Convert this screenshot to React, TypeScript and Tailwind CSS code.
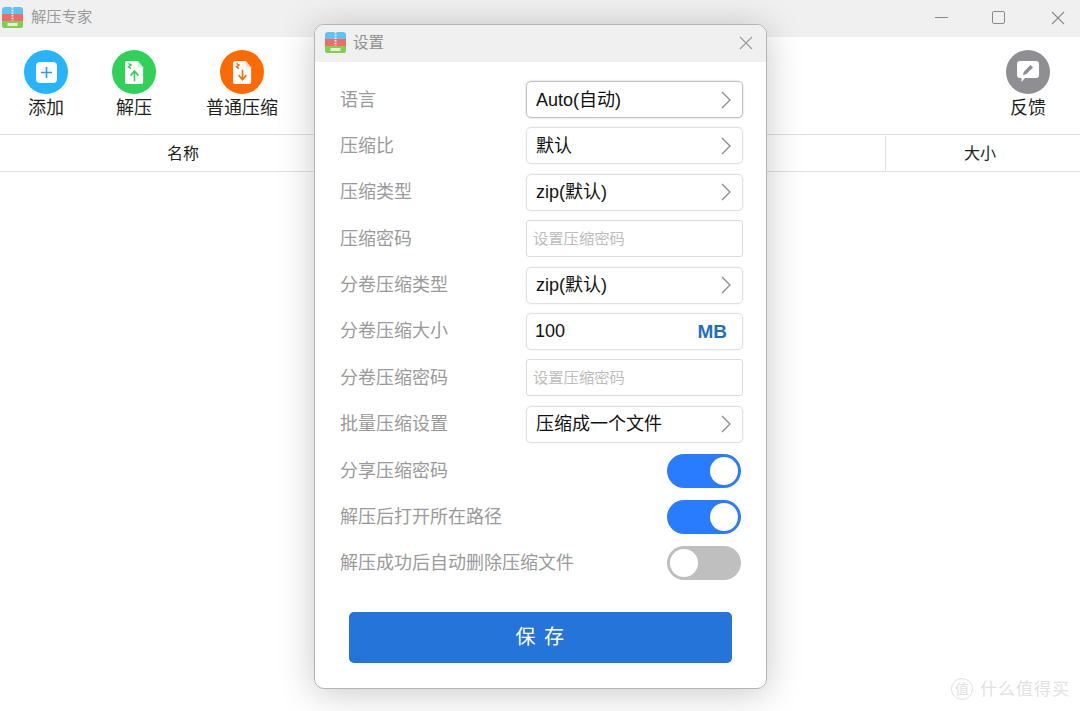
const font = { fontFamily: '"Liberation Sans", "Noto Sans CJK SC", sans-serif' }

function Logo() {
  return (
    <svg width="21" height="21" viewBox="0 0 21 21" className="shrink-0">
      <rect width="21" height="21" rx="3" fill="#5cc4f5" />
      <path d="M0 7h21v7H0z" fill="#f26a6a" />
      <path d="M0 14h21v4a3 3 0 0 1-3 3H3a3 3 0 0 1-3-3z" fill="#7fd04b" />
      <path d="M10.5 0v14" stroke="#e8eef5" strokeWidth="2" strokeDasharray="1.5 1.2" />
      <rect x="5.5" y="16" width="10" height="3" fill="#f4f8ee" opacity="0.85" />
    </svg>
  )
}

function CloseIcon({ size, color }: { size: number; color: string }) {
  return (
    <svg width={size} height={size} viewBox="0 0 14 14" fill="none" stroke={color} strokeWidth="1.1">
      <path d="M1 1l12 12M13 1L1 13" />
    </svg>
  )
}

function FileGlyph({ dir, color }: { dir: 'up' | 'down'; color: string }) {
  return (
    <svg width="19" height="23" viewBox="0 0 22 24" preserveAspectRatio="none">
      <path d="M2 0h13l6 6.5V22a2 2 0 0 1-2 2H2a2 2 0 0 1-2-2V2a2 2 0 0 1 2-2z" fill="#fff" />
      <path d="M15 0l6 6.5h-6z" fill={color} opacity="0.25" />
      <path d="M4 2.5l3 1.8-3 1.8 3 1.8" stroke={color} strokeWidth="1.6" fill="none" />
      {dir === 'up' ? (
        <path d="M11 21V11M6.5 15.2L11 10.5l4.5 4.7" stroke={color} strokeWidth="1.8" fill="none" />
      ) : (
        <path d="M11 9v10M6.5 14.8L11 19.5l4.5-4.7" stroke={color} strokeWidth="1.8" fill="none" />
      )}
    </svg>
  )
}

function ToolItem({ label, color, width, className, children }: {
  label: string; color: string; width: string; className: string; children: React.ReactNode
}) {
  return (
    <div className={`flex flex-col items-center ${width} ${className}`}>
      <div className={`h-[44px] w-[44px] rounded-full flex items-center justify-center ${color}`}>
        {children}
      </div>
      <span className="mt-[3px] text-[18px] leading-[22px] text-[#1f1f1f] whitespace-nowrap">{label}</span>
    </div>
  )
}

function Chevron() {
  return (
    <svg width="12" height="18" viewBox="0 0 12 18" fill="none" stroke="#8f8f8f" strokeWidth="1.4">
      <path d="M2 1l8 8-8 8" />
    </svg>
  )
}

function Select({ value, strong }: { value: string; strong?: boolean }) {
  return (
    <div className={`h-[37px] w-[217px] rounded-[5px] border flex items-center justify-between pl-[9px] pr-[10px] text-[18px] text-[#111] ${strong ? 'border-[#c2c2c2] shadow-[0_0_2px_rgba(0,0,0,0.25)]' : 'border-[#e0e0e0] shadow-[0_0_2px_rgba(0,0,0,0.1)]'}`}>
      <span className="pt-[1px]">{value}</span>
      <Chevron />
    </div>
  )
}

function Input({ placeholder }: { placeholder: string }) {
  return (
    <div className="h-[37px] w-[217px] rounded-[3px] border border-[#dcdcdc] flex items-center pl-[6px] pt-[1px] text-[15.3px] text-[#bdbdbd]">
      {placeholder}
    </div>
  )
}

function Toggle({ on }: { on: boolean }) {
  return (
    <div className={`h-[34px] w-[74px] mr-[2px] rounded-full p-[3px] flex ${on ? 'bg-[#2a7cff] justify-end' : 'bg-[#bfbfbf] justify-start'}`}>
      <div className="h-[28px] w-[28px] rounded-full bg-white" />
    </div>
  )
}

const rows: { label: string; el: React.ReactNode }[] = [
  { label: '语言', el: <Select value="Auto(自动)" strong /> },
  { label: '压缩比', el: <Select value="默认" /> },
  { label: '压缩类型', el: <Select value="zip(默认)" /> },
  { label: '压缩密码', el: <Input placeholder="设置压缩密码" /> },
  { label: '分卷压缩类型', el: <Select value="zip(默认)" /> },
  {
    label: '分卷压缩大小',
    el: (
      <div className="h-[37px] w-[217px] rounded-[5px] border border-[#e0e0e0] shadow-[0_0_2px_rgba(0,0,0,0.1)] flex items-center justify-between pl-[8px] pr-[15px] pt-[1px] text-[18px] text-[#111]">
        <span>100</span>
        <span className="font-bold text-[#1f6fc4] text-[19px]">MB</span>
      </div>
    ),
  },
  { label: '分卷压缩密码', el: <Input placeholder="设置压缩密码" /> },
  { label: '批量压缩设置', el: <Select value="压缩成一个文件" /> },
  { label: '分享压缩密码', el: <Toggle on /> },
  { label: '解压后打开所在路径', el: <Toggle on /> },
  { label: '解压成功后自动删除压缩文件', el: <Toggle on={false} /> },
]

export default function App() {
  return (
    <div className="relative h-[711px] w-[1080px] overflow-hidden bg-white flex flex-col" style={font}>
      <div className="h-[37px] bg-[#f0f0f0] flex items-center pl-[2px] pb-[2px] shrink-0">
        <Logo />
        <span className="ml-[8px] text-[15.3px] text-[#9a9a9a]">解压专家</span>
        <div className="ml-auto flex items-center">
          <div className="h-[1px] w-[13px] bg-[#8a8a8a] mr-[44px]" />
          <div className="h-[13px] w-[13px] rounded-[2px] border border-[#8a8a8a] mr-[46px]" />
          <div className="mr-[15px]"><CloseIcon size={14} color="#8a8a8a" /></div>
        </div>
      </div>

      <div className="h-[98px] shrink-0 border-b border-[#e0e0e0] flex pt-[13px] items-start">
        <ToolItem label="添加" color="bg-[#27b4fd]" width="w-[44px]" className="ml-[24px]">
          <div className="h-[21px] w-[21px] rounded-[4px] bg-white flex items-center justify-center">
            <svg width="11" height="11" viewBox="0 0 11 11" stroke="#2a9df4" strokeWidth="1.6">
              <path d="M5.5 0v11M0 5.5h11" />
            </svg>
          </div>
        </ToolItem>
        <ToolItem label="解压" color="bg-[#30d158]" width="w-[44px]" className="ml-[44px]">
          <FileGlyph dir="up" color="#30d158" />
        </ToolItem>
        <ToolItem label="普通压缩" color="bg-[#ff6a00]" width="w-[72px]" className="ml-[50px]">
          <FileGlyph dir="down" color="#ff6a00" />
        </ToolItem>
        <ToolItem label="反馈" color="bg-[#8e8e93]" width="w-[44px]" className="ml-auto mr-[30px]">
          <svg width="24" height="24" viewBox="0 0 24 24">
            <path d="M4 1h16a3 3 0 0 1 3 3v11a3 3 0 0 1-3 3H9l-3.500 4v-4H4a3 3 0 0 1-3-3V4a3 3 0 0 1 3-3z" fill="#fff" />
            <path d="M7 15l.8-3.200 6.800-6.800 2.400 2.400-6.800 6.800z" fill="#8e8e93" />
          </svg>
        </ToolItem>
      </div>

      <div className="h-[37px] shrink-0 border-b border-[#e0e0e0] flex pt-[1px] text-[16px] text-[#222]">
        <div className="w-[366px] flex items-center justify-center">名称</div>
        <div className="flex-1" />
        <div className="w-[195px] pr-[6px] border-l border-[#e0e0e0] flex items-center justify-center">大小</div>
      </div>

      <div className="absolute right-[10px] bottom-[9px] flex items-center gap-[7px] text-[#e2e2e2]">
        <div className="h-[22px] w-[22px] rounded-full border border-[#e2e2e2] flex items-center justify-center text-[14px]">值</div>
        <span className="text-[17px] tracking-[1px]">什么值得买</span>
      </div>

      <div className="absolute left-[314px] top-[24px] h-[665px] w-[453px] rounded-[10px] border border-[#b5b5b5] bg-white overflow-hidden shadow-[0_4px_36px_rgba(0,0,0,0.22)] flex flex-col">
        <div className="h-[37px] shrink-0 bg-[#f0f0f0] flex items-center pl-[10px] pr-[13px] pb-[2px]">
          <Logo />
          <span className="ml-[7px] text-[15.5px] text-[#8f8f8f]">设置</span>
          <div className="ml-auto"><CloseIcon size={14} color="#9a9a9a" /></div>
        </div>

        <div className="pt-[19px] pl-[25px] pr-[23px] flex flex-col gap-[9.4px]">
          {rows.map((r) => (
            <div key={r.label} className="h-[37px] flex items-center justify-between">
              <span className="pt-[1px] text-[18px] text-[#9a9a9a]">{r.label}</span>
              {r.el}
            </div>
          ))}
        </div>

        <button className="mt-[30px] ml-[34px] h-[51px] w-[383px] rounded-[5px] bg-[#2474d9] text-white text-[20px] tracking-[1.5px]">
          保 存
        </button>
      </div>
    </div>
  )
}
